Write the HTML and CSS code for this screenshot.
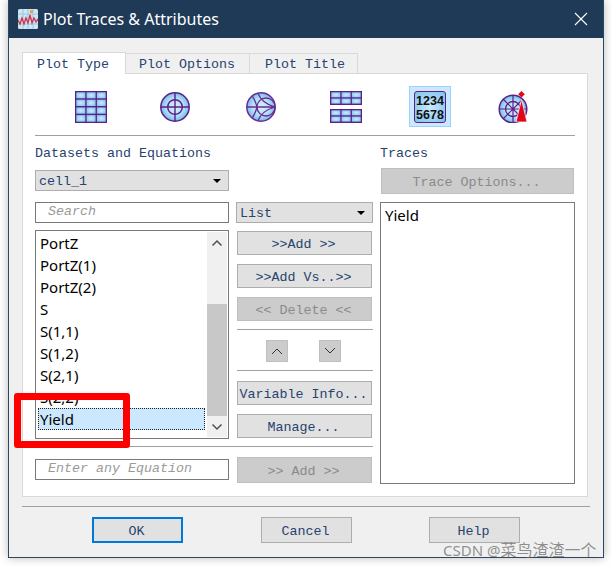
FILE: index.html
```html
<!DOCTYPE html>
<html lang="en">
<head>
<meta charset="utf-8">
<title>Plot Traces &amp; Attributes</title>
<link rel="stylesheet" href="styles.css">
</head>
<body>
<div class="window">
  <header class="titlebar">
    <svg class="app-icon" width="20" height="20" viewBox="0 0 20 20">
      <rect width="20" height="20" rx="1.5" fill="#cfe6f5"/>
      <path d="M0 5h20M0 10h20M0 15h20M5 0v20M10 0v20M15 0v20" stroke="#9cc6e3" stroke-width="1"/>
      <path d="M0 11l2 4 2-6 2 6 2-6 2 5 2-8 2 8 2-5 2 4 2-3" fill="none" stroke="#d0324a" stroke-width="1.3"/>
      <rect x="12" y="1" width="3" height="3" fill="#f0a040"/>
    </svg>
    <span class="title-text">Plot Traces &amp; Attributes</span>
    <svg class="close" width="14" height="14" viewBox="0 0 14 14"><path d="M1 1l12 12M13 1L1 13" stroke="#fff" stroke-width="1.1"/></svg>
  </header>
  <div class="content">
    <nav class="tabs">
      <span class="tab active">Plot Type</span>
      <span class="tab tab-options">Plot Options</span>
      <span class="tab tab-title">Plot Title</span>
    </nav>
    <section class="panel">
      <div class="icons">
        <span class="icon-cell">
          <svg width="32" height="32" viewBox="0 0 32 32">
            <defs>
              <radialGradient id="cell" cx="50%" cy="50%" r="70%"><stop offset="0" stop-color="#cdebff"/><stop offset="1" stop-color="#79bfec"/></radialGradient>
              <radialGradient id="disc" cx="50%" cy="50%" r="50%"><stop offset="0" stop-color="#d6efff"/><stop offset=".6" stop-color="#b8e0f8"/><stop offset="1" stop-color="#74bcea"/></radialGradient>
            </defs>
            <rect width="32" height="32" fill="#5c2089"/>
            <g fill="url(#cell)">
              <rect x="1.300" y="1.300" width="9" height="6"/><rect x="11.600" y="1.300" width="9" height="6"/><rect x="21.900" y="1.300" width="8.800" height="6"/>
              <rect x="1.300" y="8.700" width="9" height="6.300"/><rect x="11.600" y="8.700" width="9" height="6.300"/><rect x="21.900" y="8.700" width="8.800" height="6.300"/>
              <rect x="1.300" y="16.400" width="9" height="6.300"/><rect x="11.600" y="16.400" width="9" height="6.300"/><rect x="21.900" y="16.400" width="8.800" height="6.300"/>
              <rect x="1.300" y="24.100" width="9" height="6.600"/><rect x="11.600" y="24.100" width="9" height="6.600"/><rect x="21.900" y="24.100" width="8.800" height="6.600"/>
            </g>
          </svg>
        </span>
        <span class="icon-cell">
          <svg width="30" height="30" viewBox="0 0 30 30">
            <circle cx="15" cy="15" r="14.200" fill="url(#disc)" stroke="#5c2089" stroke-width="1.500"/>
            <circle cx="15" cy="15" r="7.300" fill="none" stroke="#5c2089" stroke-width="1.500"/>
            <path d="M15 1v28M1 15h28" stroke="#5c2089" stroke-width="1.400"/>
          </svg>
        </span>
        <span class="icon-cell">
          <svg width="30" height="30" viewBox="0 0 30 30">
            <circle cx="15" cy="15" r="14.200" fill="url(#disc)" stroke="#6a2c94" stroke-width="1.500"/>
            <path d="M1 15h28M29 15A9 9 0 1 0 11 15 9 9 0 1 0 29 15M29 15C22 13 15 9 12 1.500M29 15C22 17 15 21 12 28.500M6 3.500C9 8 10 11 11 15 10 19 9 22 6 26.500" fill="none" stroke="#6a2c94" stroke-width="1.300"/>
          </svg>
        </span>
        <span class="icon-cell">
          <svg width="32" height="32" viewBox="0 0 32 32">
            <rect width="32" height="14" fill="#5c2089"/>
            <rect y="18" width="32" height="14" fill="#5c2089"/>
            <g fill="url(#cell)">
              <rect x="1.300" y="1.300" width="9" height="5"/><rect x="11.600" y="1.300" width="9" height="5"/><rect x="21.900" y="1.300" width="8.800" height="5"/>
              <rect x="1.300" y="7.600" width="9" height="5"/><rect x="11.600" y="7.600" width="9" height="5"/><rect x="21.900" y="7.600" width="8.800" height="5"/>
              <rect x="1.300" y="19.300" width="9" height="5"/><rect x="11.600" y="19.300" width="9" height="5"/><rect x="21.900" y="19.300" width="8.800" height="5"/>
              <rect x="1.300" y="25.600" width="9" height="5"/><rect x="11.600" y="25.600" width="9" height="5"/><rect x="21.900" y="25.600" width="8.800" height="5"/>
            </g>
          </svg>
        </span>
        <span class="icon-cell selected">
          <span class="numbers">1234<br>5678</span>
        </span>
        <span class="icon-cell">
          <svg width="30" height="32" viewBox="0 0 30 32">
            <circle cx="15" cy="18" r="13.800" fill="url(#disc)" stroke="#5c2089" stroke-width="1.500"/>
            <circle cx="15" cy="18" r="7.500" fill="none" stroke="#5c2089" stroke-width="1.300"/>
            <path d="M15 4v28M1 18h28M5 8l20 20M25 8L5 28" stroke="#5c2089" stroke-width="1.200"/>
            <path d="M18 31L23.500 8.500 29 31z" fill="#e2061b" stroke="#fff" stroke-width=".7"/>
            <path d="M23.500 0l3.300 3.300-3.300 3.300-3.300-3.300z" fill="#e2061b"/>
          </svg>
        </span>
      </div>
      <div class="rule rule-top"></div>
      <div class="columns">
        <div class="col col-left">
          <div class="label">Datasets and Equations</div>
          <div class="select select-data"><span>cell_1</span><i class="caret"></i></div>
          <div class="field field-search">Search</div>
          <div class="listbox">
            <ul class="rows">
              <li>PortZ</li>
              <li>PortZ(1)</li>
              <li>PortZ(2)</li>
              <li>S</li>
              <li>S(1,1)</li>
              <li>S(1,2)</li>
              <li>S(2,1)</li>
              <li>S(2,2)</li>
              <li class="current">Yield</li>
            </ul>
            <div class="scrollbar">
              <div class="track">
                <svg class="arrow" width="12" height="8" viewBox="0 0 12 8"><path d="M1.500 6.500L6 2l4.500 4.500" fill="none" stroke="#505050" stroke-width="1.500"/></svg>
              </div>
              <div class="thumb"></div>
              <div class="track-end">
                <svg class="arrow" width="12" height="8" viewBox="0 0 12 8"><path d="M1.500 1.500L6 6l4.500-4.500" fill="none" stroke="#505050" stroke-width="1.500"/></svg>
              </div>
            </div>
          </div>
          <div class="field field-eq">Enter any Equation</div>
        </div>
        <div class="col col-mid">
          <div class="select select-mode"><span>List</span><i class="caret"></i></div>
          <button class="btn btn-add">&gt;&gt;Add &gt;&gt;</button>
          <button class="btn btn-next">&gt;&gt;Add Vs..&gt;&gt;</button>
          <button class="btn btn-next off">&lt;&lt; Delete &lt;&lt;</button>
          <div class="rule rule-mid"></div>
          <div class="updown">
            <span class="mini"><svg width="12" height="8" viewBox="0 0 12 8"><path d="M1 7l5-5 5 5" fill="none" stroke="#333" stroke-width="1"/></svg></span>
            <span class="mini"><svg width="12" height="8" viewBox="0 0 12 8"><path d="M1 1l5 5 5-5" fill="none" stroke="#333" stroke-width="1"/></svg></span>
          </div>
          <div class="rule rule-mid2"></div>
          <button class="btn btn-var">Variable Info...</button>
          <button class="btn btn-next">Manage...</button>
          <div class="rule rule-wide"></div>
          <button class="btn btn-eq off">&gt;&gt; Add &gt;&gt;</button>
        </div>
        <div class="col col-right">
          <div class="label label-traces">Traces</div>
          <button class="btn btn-trace off">Trace Options...</button>
          <div class="traces">Yield</div>
        </div>
      </div>
    </section>
    <div class="rule rule-foot"></div>
    <footer class="actions">
      <button class="btn act default">OK</button>
      <button class="btn act">Cancel</button>
      <button class="btn act">Help</button>
    </footer>
  </div>
</div>
<div class="highlight"></div>
<div class="watermark">CSDN @<span class="cjk">菜鸟渣渣一个</span></div>
</body>
</html>
```
FILE: styles.css
```css
* { box-sizing: border-box; }
html, body { margin: 0; padding: 0; }
body {
  position: relative;
  width: 612px;
  height: 566px;
  overflow: hidden;
  background: #fff;
  font-family: "Liberation Mono", monospace;
  font-size: 13.33px;
  color: #26436e;
}
.window {
  margin-left: 8px;
  width: 596px;
  height: 558px;
  background: #f0f0f0;
  border: 1px solid #2c4762;
  border-top: 0;
  box-shadow: 0 0 9px rgba(0, 0, 0, .28);
}
.titlebar {
  display: flex;
  align-items: center;
  height: 38px;
  padding-left: 9px;
  padding-right: 15px;
  background: #1e3a56;
  color: #fff;
}
.app-icon { flex: none; }
.title-text {
  margin-left: 5px;
  font-family: "Noto Sans", sans-serif;
  font-size: 16px;
  flex: 1;
}
.content { padding: 13px 0 0 13px; }
.tabs { display: flex; align-items: flex-end; height: 22px; }
.tab {
  display: block;
  height: 20px;
  padding-left: 13px;
  border: 1px solid #d9d9d9;
  border-bottom: 0;
  border-left: 0;
  line-height: 22px;
  background: #f0f0f0;
}
.tab.active {
  width: 104px;
  height: 22px;
  padding-left: 14px;
  border-left: 1px solid #d9d9d9;
  background: #fff;
  line-height: 23px;
  position: relative;
  top: 1px;
}
.tab-options { width: 124px; }
.tab-title { width: 108px; padding-left: 15px; }
.panel {
  width: 566px;
  height: 424px;
  background: #fff;
  border: 1px solid #d9d9d9;
  padding-left: 12px;
}
.icons {
  display: flex;
  align-items: center;
  height: 61px;
  padding-top: 4px;
}
.icon-cell {
  flex: none;
  display: flex;
  align-items: center;
  justify-content: center;
}
.icon-cell:nth-child(1) { width: 32px; margin-left: 40px; }
.icon-cell:nth-child(2) { width: 30px; margin-left: 53px; }
.icon-cell:nth-child(3) { width: 30px; margin-left: 56px; }
.icon-cell:nth-child(4) { width: 32px; margin-left: 54px; }
.icon-cell.selected {
  width: 42px;
  height: 41px;
  margin-left: 47px;
  background: #cce8ff;
  border: 1px solid #99d1ff;
}
.icon-cell:nth-child(6) { width: 30px; margin-left: 47px; }
.numbers {
  display: block;
  width: 32px;
  height: 32px;
  padding-top: 2px;
  border: 1px solid #5c2089;
  border-radius: 3px;
  background: radial-gradient(circle, #c9e9fd, #7fc2ec);
  color: #111;
  font-family: "Liberation Sans", sans-serif;
  font-size: 12.500px;
  font-weight: 700;
  line-height: 14px;
  text-align: center;
}
.rule { height: 1px; background: #a0a0a0; }
.rule-top { width: 540px; }
.columns { display: flex; gap: 8px; }
.col { flex: none; }
.col-left, .col-right { width: 194px; }
.col-mid { width: 136px; padding-top: 66px; }
.label { height: 16px; margin-top: 9px; line-height: 18px; }
.label-traces { margin-left: -1px; }
.select {
  display: flex;
  align-items: center;
  justify-content: space-between;
  height: 21px;
  padding: 1px 7px 0 3px;
  background: #e1e1e1;
  border: 1px solid #adadad;
}
.select-data { margin-top: 9px; }
.select-mode { width: 137px; margin-left: -1px; }
.caret {
  width: 0;
  height: 0;
  margin-top: -1px;
  border-left: 4px solid transparent;
  border-right: 4px solid transparent;
  border-top: 4px solid #000;
}
.field {
  height: 21px;
  padding-left: 12px;
  border: 1px solid #7a7a7a;
  background: #fff;
  color: #9a9a9a;
  font-style: italic;
  line-height: 18px;
}
.field-search { margin-top: 11px; }
.field-eq { margin-top: 20px; }
.listbox {
  display: flex;
  gap: 2px;
  height: 209px;
  margin-top: 7px;
  padding: 1px 1px 1px 2px;
  border: 1px solid #7a7a7a;
  background: #fff;
}
.rows {
  flex: none;
  list-style: none;
  margin: 0;
  padding: 0;
  width: 167px;
  font-family: "Noto Sans", sans-serif;
  font-size: 15px;
  line-height: 22px;
  color: #000;
}
.rows li { height: 22px; padding-left: 2px; white-space: nowrap; }
.rows .current {
  background: #cce8ff;
  border: 1px dotted #222;
  padding-left: 1px;
  line-height: 20px;
}
.scrollbar {
  flex: none;
  display: flex;
  flex-direction: column;
  width: 20px;
  background: #f0f0f0;
}
.track { height: 72px; padding-top: 7px; }
.thumb { height: 112px; background: #c8c8c8; }
.track-end { height: 21px; padding-top: 7px; }
.arrow { display: block; margin: 0 auto; }
.btn {
  display: block;
  margin: 0;
  padding: 2px 2px 0 0;
  border: 1px solid #adadad;
  background: #e1e1e1;
  font: inherit;
  color: inherit;
  text-align: center;
  white-space: nowrap;
}
.btn.off {
  background: #cccccc;
  border-color: #bfbfbf;
  color: #8a8a8a;
}
.col-mid .btn { width: 135px; height: 24px; }
.col-mid .btn-add { margin-top: 8px; }
.col-mid .btn-next { margin-top: 9px; }
.col-mid .btn-var { margin-top: 10px; }
.rule-mid { margin-top: 8px; }
.updown {
  display: flex;
  gap: 31px;
  height: 22px;
  margin-top: 10px;
  padding-left: 29px;
}
.mini {
  display: flex;
  align-items: center;
  justify-content: center;
  width: 22px;
  height: 22px;
  background: #cccccc;
  border: 1px solid #bfbfbf;
}
.rule-mid2 { margin-top: 8px; }
.rule-wide { margin: 8px 0 0 -201px; }
.col-mid .btn-eq { height: 26px; margin-top: 10px; }
.btn-trace {
  width: 193px;
  height: 26px;
  margin-top: 7px;
}
.traces {
  width: 195px;
  height: 282px;
  margin: 8px 0 0 -1px;
  padding-left: 4px;
  border: 1px solid #7a7a7a;
  font-family: "Noto Sans", sans-serif;
  font-size: 15px;
  line-height: 24px;
  color: #000;
  background: #fff;
}
.rule-foot { width: 568px; margin-top: 9px; }
.actions { display: flex; margin-top: 10px; padding-left: 70px; }
.act { width: 91px; height: 26px; margin-right: 78px; }
.act:nth-child(2) { margin-right: 77px; }
.default { border: 2px solid #0078d7; }
.highlight {
  position: absolute;
  left: 14px;
  top: 393px;
  width: 116px;
  height: 55px;
  border: 7px solid #ff0000;
  border-radius: 3px;
}
.watermark {
  position: absolute;
  left: 443px;
  top: 539px;
  font-family: "Noto Sans", "Noto Sans CJK SC", sans-serif;
  font-size: 15px;
  line-height: 20px;
  white-space: nowrap;
  color: rgba(110, 110, 110, .75);
}
.cjk { font-family: "Noto Sans CJK SC", sans-serif; font-size: 16px; }
```
